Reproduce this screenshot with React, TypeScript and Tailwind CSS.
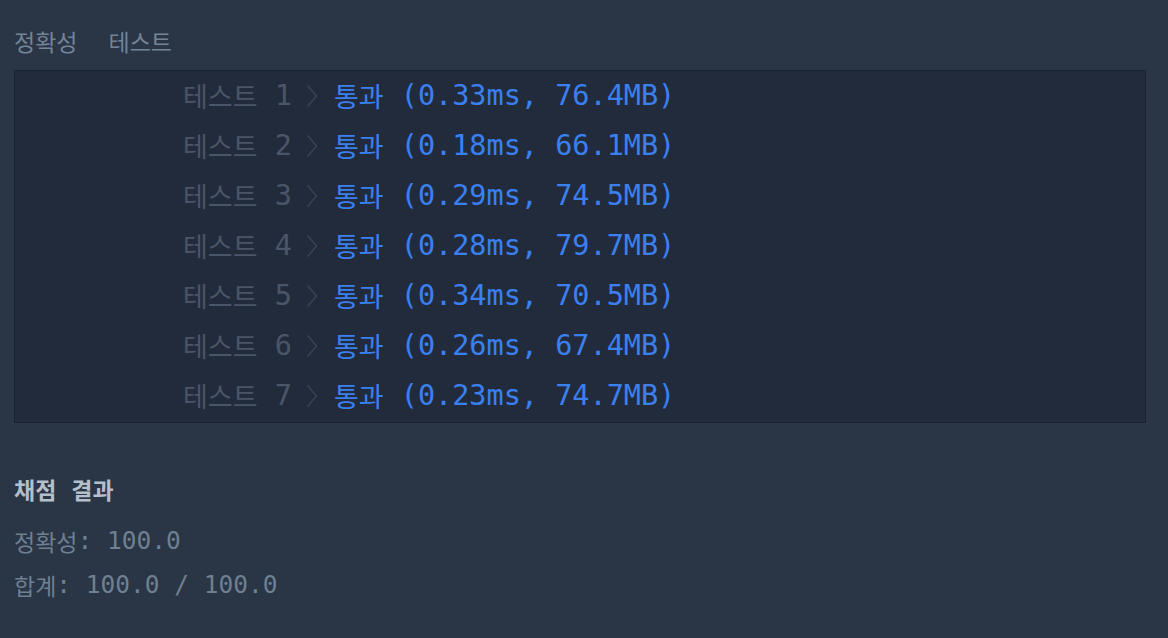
import React from "react";

const rows = [
  ["1", "0.33ms, 76.4MB"],
  ["2", "0.18ms, 66.1MB"],
  ["3", "0.29ms, 74.5MB"],
  ["4", "0.28ms, 79.7MB"],
  ["5", "0.34ms, 70.5MB"],
  ["6", "0.26ms, 67.4MB"],
  ["7", "0.23ms, 74.7MB"],
];

const ko = "font-['Noto_Sans_CJK_KR',sans-serif]";

function Chevron() {
  return (
    <svg width="12" height="24" viewBox="0 0 12 24" className="ml-[14px] shrink-0" fill="none">
      <path d="M1.5 1.5 L10.5 12 L1.5 22.5" stroke="#3a4457" strokeWidth="1.3" />
    </svg>
  );
}

export default function App() {
  return (
    <div className="w-full h-[638px] bg-[#2a3546] pl-[14px] pr-[22px] font-['DejaVu_Sans_Mono','Noto_Sans_CJK_KR',monospace] overflow-hidden">
      <div className="flex items-center h-[36px] pt-[23px] box-content text-[#748497]">
        <span className={`${ko} text-[23px] leading-[36px]`}>정확성</span>
        <span className={`${ko} text-[23px] leading-[36px] ml-[31px]`}>테스트</span>
      </div>
      <div className="mt-[11px] border border-[#1b2231] bg-[#222b3c] pb-[1px]">
        {rows.map(([n, v]) => (
          <div key={n} className="flex items-center h-[50px] pl-[168px]">
            <span className={`${ko} text-[27px] text-[#4a5568]`}>테스트</span>
            <span className="text-[28.5px] text-[#4a5568] whitespace-pre"> {n}</span>
            <Chevron />
            <span className={`${ko} text-[27px] text-[#3b80f0] ml-[16px]`}>통과</span>
            <span className="text-[28.5px] text-[#3b80f0] whitespace-pre"> ({v})</span>
          </div>
        ))}
      </div>
      <div className="mt-[44px] h-[44px] flex items-center text-[#b3bfcb]">
        <span className={`${ko} text-[23px] font-semibold`}>채점</span>
        <span className={`${ko} text-[23px] font-semibold ml-[15px]`}>결과</span>
      </div>
      <div className="mt-[8px] h-[44px] flex items-center text-[#6e8091] text-[24.5px] whitespace-pre">
        <span className={`${ko} text-[23px]`}>정확성</span>
        <span>: 100.0</span>
      </div>
      <div className="h-[44px] flex items-center text-[#6e8091] text-[24.5px] whitespace-pre">
        <span className={`${ko} text-[23px]`}>합계</span>
        <span>: 100.0 / 100.0</span>
      </div>
    </div>
  );
}
